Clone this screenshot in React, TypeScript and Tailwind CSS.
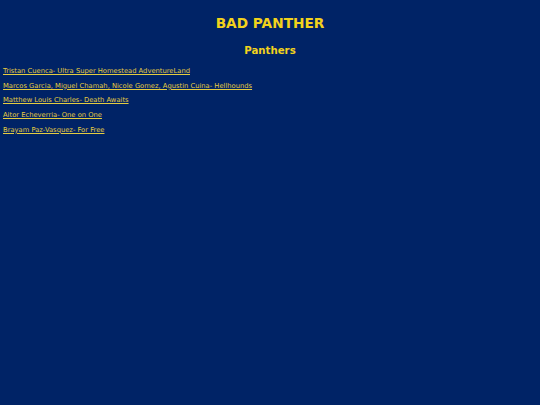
const links = [
  'Tristan Cuenca- Ultra Super Homestead AdventureLand',
  'Marcos Garcia, Miguel Chamah, Nicole Gomez, Agustin Cuina- Hellhounds',
  'Matthew Louis Charles- Death Awaits',
  'Aitor Echeverria- One on One',
  'Brayam Paz-Vasquez- For Free',
];

export default function App() {
  return (
    <div className="min-h-[405px] w-full bg-[#002366] px-[3px] pt-[15px] font-['DejaVu_Sans',Verdana,sans-serif]">
      <h1 className="text-center text-[13.7px] font-bold leading-[16px] text-[#f2d21c]">BAD PANTHER</h1>
      <h2 className="mt-[13px] text-center text-[10.2px] font-bold leading-[14px] text-[#f2d21c]">Panthers</h2>
      <ul className="mt-[9px] flex flex-col gap-[5px]">
        {links.map((l) => (
          <li key={l} className="text-[6.75px] leading-[9.7px]">
            <a href="#" className="text-[#e4cc40] underline">
              {l}
            </a>
          </li>
        ))}
      </ul>
    </div>
  );
}
